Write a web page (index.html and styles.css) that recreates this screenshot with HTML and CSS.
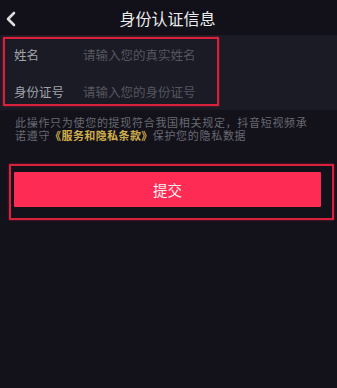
FILE: index.html
```html
<!DOCTYPE html>
<html lang="zh-CN">
<head>
  <meta charset="UTF-8" />
  <title>身份认证信息</title>
  <link rel="stylesheet" href="styles.css">
</head>
<body>

<div class="page">
  <div class="header">
    <span class="back">
      <svg width="12" height="16" viewBox="0 0 12 16">
        <polyline points="9,2 3,8 9,14" fill="none" stroke="#dcdcdc" stroke-width="2.6" stroke-linecap="round" stroke-linejoin="round"/>
      </svg>
    </span>
    <div class="title">身份认证信息</div>
  </div>

  <div class="form">
    <div class="row">
      <div class="label">姓名</div>
      <div class="placeholder">请输入您的真实姓名</div>
    </div>
    <div class="row">
      <div class="label">身份证号</div>
      <div class="placeholder">请输入您的身份证号</div>
    </div>
  </div>

  <div class="notice">此操作只为使您的提现符合我国相关规定，抖音短视频承<br>诺遵守<span class="link">《服务和隐私条款》</span>保护您的隐私数据</div>

  <button class="submit">提交</button>

  <div class="mark mark-form"></div>
  <div class="mark mark-button"></div>
</div>

</body>
</html>
```

FILE: styles.css
```css
* {
  box-sizing: border-box;
}

html, body {
  margin: 0;
  padding: 0;
  height: 100%;
  background: #13121b;
  font-family: "Noto Sans CJK SC", "Noto Sans", sans-serif;
}

.page {
  position: relative;
  width: 337px;
  height: 388px;
  overflow: hidden;
}

.header {
  position: relative;
  height: 35px;
  display: flex;
  align-items: center;
  justify-content: center;
  background: #121119;
}

.back {
  position: absolute;
  left: 5px;
  top: 8px;
}

.title {
  color: #ececec;
  font-size: 16px;
  margin-left: -2px;
}

.form {
  background: #1a1b25;
  padding-top: 1px;
}

.row {
  display: flex;
  align-items: center;
  height: 37px;
  padding-left: 14px;
}

.label {
  width: 69px;
  font-size: 12.5px;
  color: #a3a3aa;
}

.placeholder {
  font-size: 12.5px;
  color: #56565f;
}

/* latin font first keeps the line boxes tight, glyphs come from the CJK font */
.notice {
  margin-top: 7px;
  padding-left: 15px;
  font-family: "Liberation Sans", "Noto Sans CJK SC", sans-serif;
  font-size: 11px;
  letter-spacing: 0.7px;
  line-height: 13px;
  color: #696971;
  white-space: nowrap;
}

.link {
  color: #cfae4c;
  font-weight: bold;
  letter-spacing: 0.4px;
}

.submit {
  display: block;
  margin: 29px 0 0 14px;
  width: 307px;
  height: 35px;
  border: none;
  border-radius: 1px;
  background: #fe2c55;
  color: #f4f0f2;
  font-family: inherit;
  font-size: 14.5px;
}

.mark {
  position: absolute;
  border: 2px solid #d9203c;
  box-shadow: 0 0 2px rgba(217, 32, 60, 0.6);
}

.mark-form {
  left: 3px;
  top: 37px;
  width: 216px;
  height: 69px;
}

.mark-button {
  left: 9px;
  top: 164px;
  width: 325px;
  height: 56px;
}
```
